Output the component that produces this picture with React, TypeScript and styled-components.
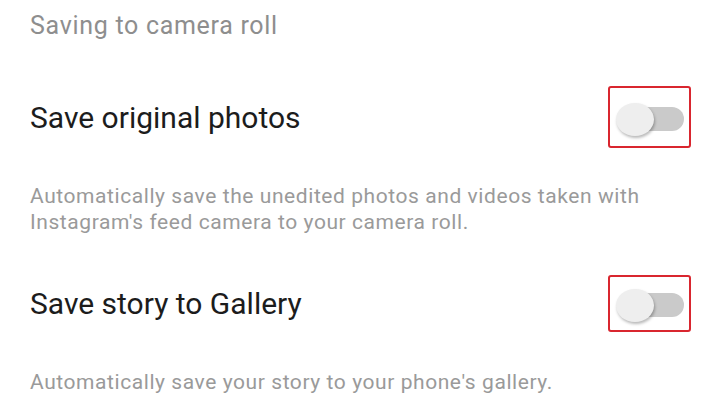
import React from 'react';
import styled, { createGlobalStyle } from 'styled-components';

const GlobalStyle = createGlobalStyle`
  html, body {
    margin: 0;
    padding: 0;
    background: #ffffff;
  }
  body {
    font-family: Roboto, "Liberation Sans", Arial, sans-serif;
  }
`;

//#region styles
const Screen = styled.div`
  width: 720px;
  height: 413px;
  overflow: hidden;
  background: #ffffff;
  padding: 0 29px 0 30px;
  box-sizing: border-box;
`;

const SectionHeader = styled.div`
  margin-top: 11px;
  font-size: 25px;
  line-height: 30px;
  letter-spacing: 0.7px;
  color: #8e8e8e;
`;

const SettingRow = styled.div<{ $top: number; $height: number }>`
  margin-top: ${p => p.$top}px;
  height: ${p => p.$height}px;
  display: flex;
  align-items: center;
  justify-content: space-between;
`;

const SettingTitle = styled.span`
  font-size: 30px;
  color: #1c1c1c;
`;

const Description = styled.p<{ $top: number }>`
  margin: ${p => p.$top}px 0 0;
  font-size: 21px;
  line-height: 26px;
  letter-spacing: 0.57px;
  color: #9a9a9a;
`;

const Highlight = styled.div<{ $height: number }>`
  width: 83px;
  height: ${p => p.$height}px;
  box-sizing: border-box;
  border: 2.5px solid #d9262f;
  border-radius: 3px;
  display: flex;
  align-items: center;
  justify-content: center;
`;

const Switch = styled.div`
  position: relative;
  width: 68px;
  height: 33px;
  margin-top: 4px;
`;

const Track = styled.div`
  position: absolute;
  left: 12px;
  right: 0;
  top: 4px;
  height: 24px;
  border-radius: 12px;
  background: #cacaca;
`;

const Knob = styled.div`
  position: absolute;
  left: 0;
  top: 0;
  width: 38px;
  height: 33px;
  border-radius: 50%;
  background: #eeeeee;
  box-shadow: 1px 2px 3px rgba(0, 0, 0, 0.28);
`;
//#endregion

interface Setting {
  title: string;
  description: string[];
  rowTop: number;
  rowHeight: number;
  descTop: number;
}

const settings: Setting[] = [
  {
    title: 'Save original photos',
    description: [
      'Automatically save the unedited photos and videos taken with',
      "Instagram's feed camera to your camera roll.",
    ],
    rowTop: 45,
    rowHeight: 62,
    descTop: 35,
  },
  {
    title: 'Save story to Gallery',
    description: ["Automatically save your story to your phone's gallery."],
    rowTop: 40,
    rowHeight: 57,
    descTop: 37,
  },
];

const Toggle: React.FunctionComponent<{ height: number }> = ({ height }) => (
  <Highlight $height={height}>
    <Switch>
      <Track />
      <Knob />
    </Switch>
  </Highlight>
);

const App: React.FunctionComponent = () => (
  <React.Fragment>
    <GlobalStyle />
    <Screen>
      <SectionHeader>Saving to camera roll</SectionHeader>
      {settings.map(setting => (
        <React.Fragment key={setting.title}>
          <SettingRow $top={setting.rowTop} $height={setting.rowHeight}>
            <SettingTitle>{setting.title}</SettingTitle>
            <Toggle height={setting.rowHeight} />
          </SettingRow>
          <Description $top={setting.descTop}>
            {setting.description.map((line, i) => (
              <React.Fragment key={i}>
                {i > 0 && <br />}
                {line}
              </React.Fragment>
            ))}
          </Description>
        </React.Fragment>
      ))}
    </Screen>
  </React.Fragment>
);

export default App;
